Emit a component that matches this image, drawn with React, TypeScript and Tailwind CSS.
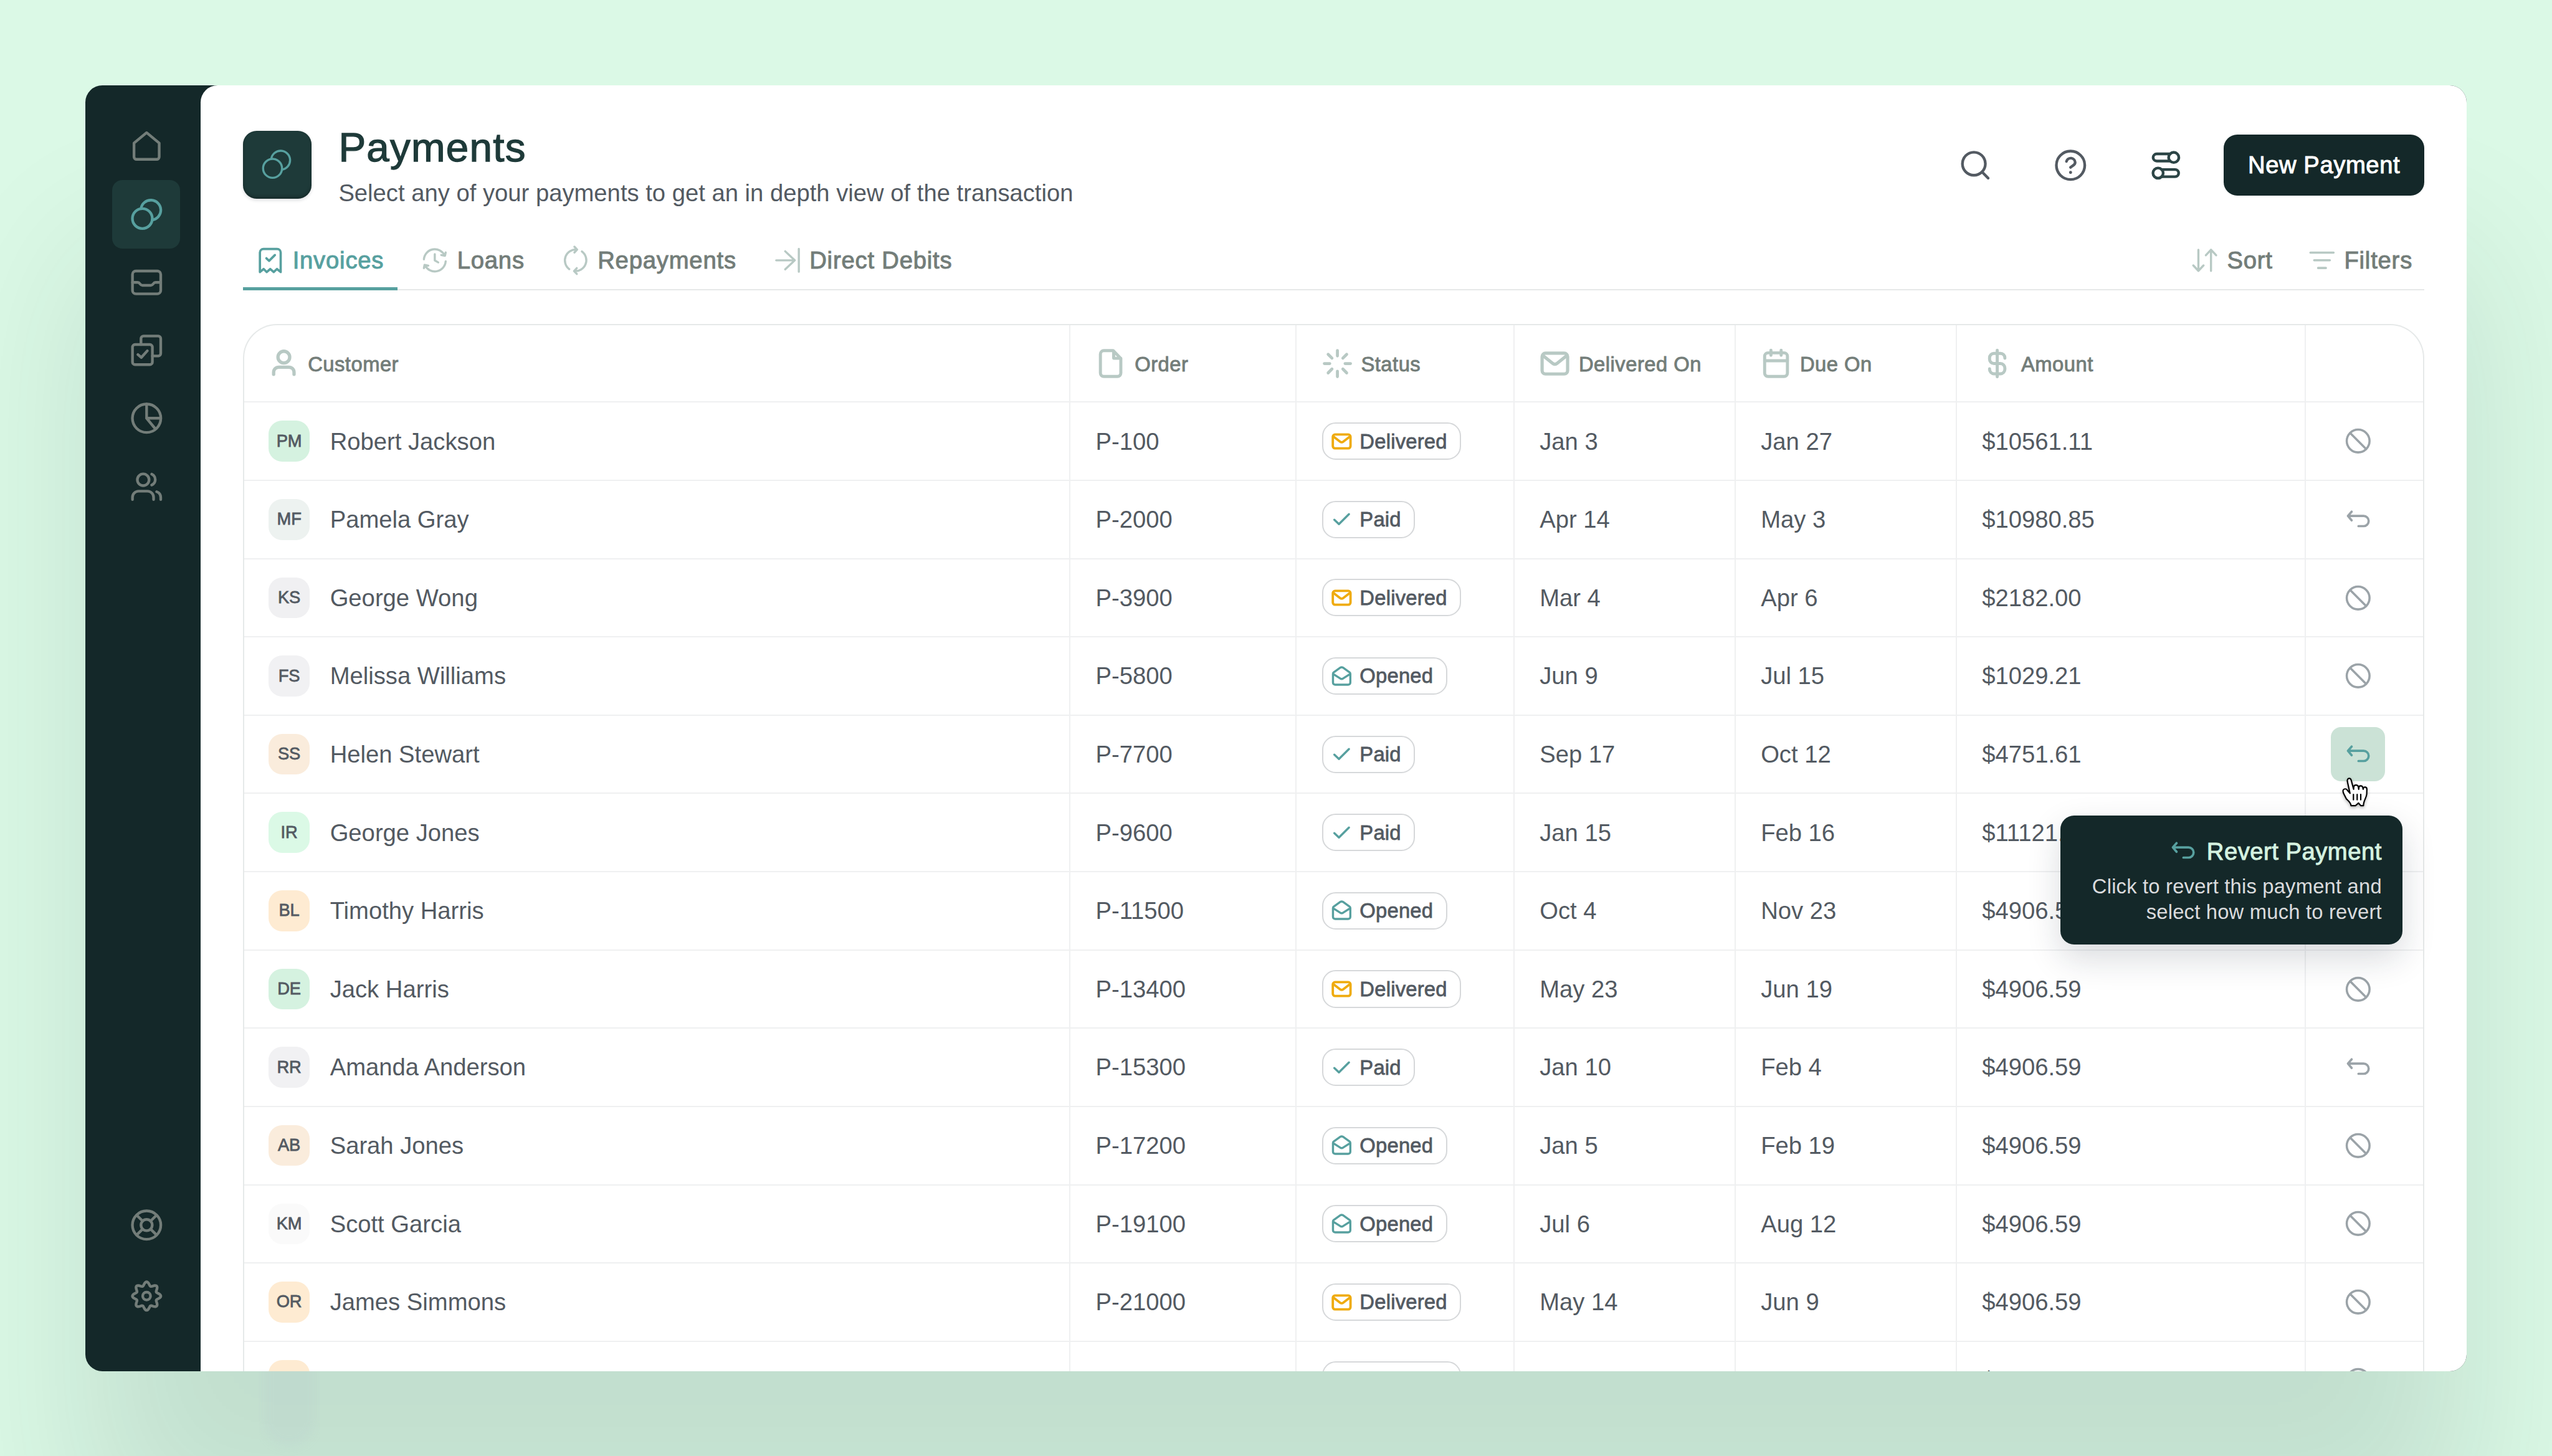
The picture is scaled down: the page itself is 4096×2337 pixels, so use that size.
import { useState } from 'react';
import type { ReactNode } from 'react';

type Status = 'Delivered' | 'Paid' | 'Opened';

interface Payment {
  initials: string;
  color: string;
  name: string;
  order: string;
  status: Status;
  delivered: string;
  due: string;
  amount: string;
  currency?: string;
}

const payments: Payment[] = [
  { initials: 'PM', color: 'bg-[#d5f2e0]', name: 'Robert Jackson', order: 'P-100', status: 'Delivered', delivered: 'Jan 3', due: 'Jan 27', amount: '$10561.11' },
  { initials: 'MF', color: 'bg-[#edf2f0]', name: 'Pamela Gray', order: 'P-2000', status: 'Paid', delivered: 'Apr 14', due: 'May 3', amount: '$10980.85' },
  { initials: 'KS', color: 'bg-[#f0f0f2]', name: 'George Wong', order: 'P-3900', status: 'Delivered', delivered: 'Mar 4', due: 'Apr 6', amount: '$2182.00' },
  { initials: 'FS', color: 'bg-[#f1f1f3]', name: 'Melissa Williams', order: 'P-5800', status: 'Opened', delivered: 'Jun 9', due: 'Jul 15', amount: '$1029.21' },
  { initials: 'SS', color: 'bg-[#faecdc]', name: 'Helen Stewart', order: 'P-7700', status: 'Paid', delivered: 'Sep 17', due: 'Oct 12', amount: '$4751.61' },
  { initials: 'IR', color: 'bg-[#dbf9e6]', name: 'George Jones', order: 'P-9600', status: 'Paid', delivered: 'Jan 15', due: 'Feb 16', amount: '$11121.00' },
  { initials: 'BL', color: 'bg-[#feebd2]', name: 'Timothy Harris', order: 'P-11500', status: 'Opened', delivered: 'Oct 4', due: 'Nov 23', amount: '$4906.59' },
  { initials: 'DE', color: 'bg-[#d5f2e0]', name: 'Jack Harris', order: 'P-13400', status: 'Delivered', delivered: 'May 23', due: 'Jun 19', amount: '$4906.59' },
  { initials: 'RR', color: 'bg-[#f1f1f3]', name: 'Amanda Anderson', order: 'P-15300', status: 'Paid', delivered: 'Jan 10', due: 'Feb 4', amount: '$4906.59' },
  { initials: 'AB', color: 'bg-[#faecdc]', name: 'Sarah Jones', order: 'P-17200', status: 'Opened', delivered: 'Jan 5', due: 'Feb 19', amount: '$4906.59' },
  { initials: 'KM', color: 'bg-[#fafafa]', name: 'Scott Garcia', order: 'P-19100', status: 'Opened', delivered: 'Jul 6', due: 'Aug 12', amount: '$4906.59' },
  { initials: 'OR', color: 'bg-[#feebd2]', name: 'James Simmons', order: 'P-21000', status: 'Delivered', delivered: 'May 14', due: 'Jun 9', amount: '$4906.59' },
  { initials: 'TB', color: 'bg-[#feebd2]', name: 'David Reid', order: 'P-22900', status: 'Delivered', delivered: 'Apr 18', due: 'Jul 18', amount: '$4906.59', currency: 'USD' },
];

interface IconProps {
  className?: string;
  stroke?: number;
  box?: string;
  children?: ReactNode;
}

const Icon = ({ className = 'size-5', stroke = 1.6, box = '0 0 20 20', children }: IconProps) => (
  <svg
    viewBox={box}
    className={`shrink-0 overflow-visible ${className}`}
    fill="none"
    stroke="currentColor"
    strokeWidth={stroke}
    strokeLinecap="round"
    strokeLinejoin="round"
  >
    {children}
  </svg>
);

const HomeIcon = () => (
  <Icon>
    <path d="M2.6 7.9 10 1.8l7.4 6.1V16a1.5 1.5 0 0 1-1.5 1.5H4.1A1.5 1.5 0 0 1 2.6 16z" />
  </Icon>
);

const CoinsIcon = ({ className, stroke }: IconProps) => (
  <Icon className={className} stroke={stroke}>
    <circle cx="7.5" cy="12.4" r="5.85" />
    <path d="M6.7 6.6a5.85 5.85 0 1 1 6.6 6.6" />
  </Icon>
);

const InboxIcon = () => (
  <Icon>
    <rect x="1.7" y="3.3" width="16.6" height="13.4" rx="2" />
    <path d="M1.7 10h3c1.6 0 1.3 1.7 2.8 1.7h5c1.5 0 1.2-1.7 2.8-1.7h3" />
  </Icon>
);

const TasksIcon = () => (
  <Icon>
    <rect x="1.7" y="6.6" width="11.7" height="11.8" rx="1.5" />
    <path d="M6.7 6.6V3.1a1.5 1.5 0 0 1 1.5-1.5h8.6a1.5 1.5 0 0 1 1.5 1.5v8.7a1.5 1.5 0 0 1-1.5 1.5h-3.4M4.9 12.5l2 1.7 3.5-3.9" />
  </Icon>
);

const ChartIcon = () => (
  <Icon>
    <circle cx="10" cy="10" r="8.35" />
    <path d="M10 1.7V10h8.3M10 10l5.2 6.3" />
  </Icon>
);

const UsersIcon = () => (
  <Icon>
    <circle cx="8" cy="5.9" r="3.45" />
    <path d="M1.7 17.5v-1.3a3.6 3.6 0 0 1 3.6-3.6h5.2a3.6 3.6 0 0 1 3.6 3.6v1.3M13 2.6A3.5 3.5 0 0 1 13 9M15.9 12.9a3.6 3.6 0 0 1 2.4 3.3v1.3" />
  </Icon>
);

const HelpBuoyIcon = () => (
  <Icon>
    <circle cx="10" cy="10" r="8.35" />
    <circle cx="10" cy="10" r="3.3" />
    <path d="m4.2 4.2 3.4 3.4M12.4 12.4l3.4 3.4M15.8 4.2l-3.4 3.4M7.6 12.4l-3.4 3.4" />
  </Icon>
);

// eight rounded teeth round the hub
const gearPoints = Array.from({ length: 128 }, (_, i) => {
  const angle = (i / 128) * Math.PI * 2;
  const radius = 7.25 + 1.1 * Math.cos(angle * 8);
  return `${(10 + radius * Math.sin(angle)).toFixed(2)},${(10 - radius * Math.cos(angle)).toFixed(2)}`;
}).join(' ');

const GearIcon = () => (
  <Icon>
    <polygon points={gearPoints} />
    <circle cx="10" cy="10" r="2.3" />
  </Icon>
);

const ReceiptIcon = () => (
  <Icon className="size-4" box="0 0 16 16" stroke={1.35}>
    <path d="M1.9 14.9V3.4A2.1 2.1 0 0 1 4 1.3h8a2.1 2.1 0 0 1 2.1 2.1v11.5l-2.2-1.8-1.9 1.8-2-1.8-2.1 1.8-1.8-1.8zM5.7 6.8l1.6 1.5 3.4-3.4" />
  </Icon>
);

const LoanIcon = () => (
  <Icon className="size-4" box="0 0 16 16" stroke={1.25}>
    <path d="M1.6 7.4a6.4 6.4 0 0 1 12.2-2.2M14.4 8.6a6.4 6.4 0 0 1-12.2 2.2M14.4 3.4 14 5.3l-2.2-.4M1.6 12.6l.4-1.9 2.2.4M8 4.4v3.7l2 1.1" />
  </Icon>
);

const RepaymentIcon = () => (
  <Icon className="size-4" box="0 0 16 16" stroke={1.25}>
    <path d="M4.3 13.2A6.4 6.4 0 0 1 8.9 1.7M11.7 2.8A6.4 6.4 0 0 1 7.1 14.3M7.3 0l1.6 1.7-1.6 1.7M8.7 16l-1.6-1.7 1.6-1.7" />
  </Icon>
);

const DebitIcon = () => (
  <Icon className="size-4" box="0 0 16 16" stroke={1.25}>
    <path d="M1.4 8h10.9M6.7 2.7 12.3 8l-5.6 5.3M14.7 1.3v13.4" />
  </Icon>
);

const SortIcon = () => (
  <Icon className="size-4" box="0 0 16 16" stroke={1.25}>
    <path d="M4.2 1.8v12.4M1.2 11l3 3.2 3-3.2M11.6 14.2V1.8M8.6 5l3-3.2 3 3.2" />
  </Icon>
);

const FilterIcon = () => (
  <Icon className="size-4" box="0 0 16 16" stroke={1.3}>
    <path d="M1.2 3.5h13.6M3.4 8h9.2M5.7 12.5h4.6" />
  </Icon>
);

const UserIcon = () => (
  <Icon className="size-4.5" box="0 0 18 18" stroke={1.95}>
    <circle cx="9" cy="5.2" r="3.45" />
    <path d="M3 15.3v-1.2a3 3 0 0 1 3-3h6a3 3 0 0 1 3 3v1.2" />
  </Icon>
);

const FileIcon = () => (
  <Icon className="size-4.5" box="0 0 18 18" stroke={1.8}>
    <path d="M10.5 1.4H5a2 2 0 0 0-2 2v11.2a2 2 0 0 0 2 2h8a2 2 0 0 0 2-2V6zM10.8 1.6v4.3H15" />
  </Icon>
);

const SpinnerIcon = () => (
  <Icon className="size-4.5" box="0 0 18 18" stroke={1.75}>
    <path d="M9 1.3v3.2M9 13.5v3.2M1.3 9h3.2M13.5 9h3.2M3.55 3.55 5.8 5.8M12.2 12.2l2.25 2.25M3.55 14.45 5.8 12.2M12.2 5.8l2.25-2.25" />
  </Icon>
);

const MailIcon = () => (
  <Icon className="size-4.5" box="0 0 18 18" stroke={1.9}>
    <rect x="1.5" y="2.9" width="15" height="12.2" rx="2" />
    <path d="m2 4.3 5.7 4.6a2 2 0 0 0 2.6 0L16 4.3" />
  </Icon>
);

const CalendarIcon = () => (
  <Icon className="size-4.5" box="0 0 18 18" stroke={1.8}>
    <rect x="2.3" y="2.7" width="13.4" height="13.9" rx="2" />
    <path d="M2.3 7.3h13.4M6 1.2v2.9M12 1.2v2.9" />
  </Icon>
);

const DollarIcon = () => (
  <Icon className="size-4.5" box="0 0 18 18" stroke={1.8}>
    <path d="M9 1.2v15.6M13.5 5.9v-.3A2.6 2.6 0 0 0 10.9 3H7.1a2.6 2.6 0 0 0-2.6 2.6v.8A2.6 2.6 0 0 0 7.1 9h3.8a2.6 2.6 0 0 1 2.6 2.6v.8a2.6 2.6 0 0 1-2.6 2.6H7.1a2.6 2.6 0 0 1-2.6-2.6v-.3" />
  </Icon>
);

const BlockedIcon = () => (
  <Icon className="size-4" box="0 0 16 16" stroke={1.3}>
    <circle cx="8" cy="8" r="6.7" />
    <path d="m3.3 3.3 9.4 9.4" />
  </Icon>
);

const RevertIcon = () => (
  <Icon className="size-4" box="0 0 16 16" stroke={1.35}>
    <path d="M4.2 3.4 2 5.9l2.2 2.6M2 5.9h9.2a3 3 0 0 1 0 6h-3" />
  </Icon>
);

const statusIcons: Record<Status, ReactNode> = {
  Delivered: (
    <Icon className="size-3 text-[#efab0f]" box="0 0 12 12" stroke={1.4}>
      <rect x=".8" y="2" width="10.4" height="8.1" rx="1.3" />
      <path d="m1.2 3.2 3.9 3a1.5 1.5 0 0 0 1.8 0l3.9-3" />
    </Icon>
  ),
  Opened: (
    <Icon className="size-3 text-[#57a09f]" box="0 0 12 12" stroke={1.25}>
      <path d="M.9 4.6v5.1c0 .8.6 1.3 1.3 1.3h7.6c.7 0 1.3-.5 1.3-1.3V4.6c0-.4-.2-.8-.6-1L6.7.9a1.4 1.4 0 0 0-1.4 0L1.5 3.6c-.4.2-.6.6-.6 1zM1.2 4.8l3.9 2.5a1.5 1.5 0 0 0 1.8 0l3.9-2.5" />
    </Icon>
  ),
  Paid: (
    <Icon className="size-3 text-[#57a09f]" box="0 0 12 12" stroke={1.25}>
      <path d="m1.7 6.3 2.7 2.6L10.300 3" />
    </Icon>
  ),
};

const grid = 'grid grid-cols-[30.34375rem_8.3125rem_8rem_8.125rem_8.125rem_12.8125rem_1fr]';
const cell = 'flex items-center border-r-[0.0625rem] border-[#eff0f1] pl-[0.921875rem] first:pl-[0.89rem]';

const columns = [
  { label: 'Customer', icon: <UserIcon /> },
  { label: 'Order', icon: <FileIcon /> },
  { label: 'Status', icon: <SpinnerIcon /> },
  { label: 'Delivered On', icon: <MailIcon /> },
  { label: 'Due On', icon: <CalendarIcon /> },
  { label: 'Amount', icon: <DollarIcon /> },
];

const tabs = [
  { label: 'Invoices', icon: <ReceiptIcon /> },
  { label: 'Loans', icon: <LoanIcon /> },
  { label: 'Repayments', icon: <RepaymentIcon /> },
  { label: 'Direct Debits', icon: <DebitIcon /> },
];

const Sidebar = () => (
  <aside className="flex w-17 shrink-0 flex-col items-center pt-4 pl-1 text-[#737d79]">
    <button className="flex size-10 items-center justify-center"><HomeIcon /></button>
    <button className="flex size-10 items-center justify-center rounded-[0.375rem] bg-[#1e3a39] text-[#57a09f]">
      <CoinsIcon />
    </button>
    <button className="flex size-10 items-center justify-center"><InboxIcon /></button>
    <button className="flex size-10 items-center justify-center"><TasksIcon /></button>
    <button className="flex size-10 items-center justify-center"><ChartIcon /></button>
    <button className="flex size-10 items-center justify-center"><UsersIcon /></button>
    <div className="mt-auto flex flex-col gap-0.5 pb-6">
      <button className="flex size-10 items-center justify-center"><HelpBuoyIcon /></button>
      <button className="flex size-10 items-center justify-center"><GearIcon /></button>
    </div>
  </aside>
);

const Header = () => (
  <header className="flex h-[3.125rem] items-start">
    <div className="mt-[0.1875rem] flex size-10 items-center justify-center rounded-lg bg-[#1e3a39] pr-[0.0625rem] pb-[0.0625rem] text-[#57a09f] shadow-[0_0.0625rem_0.125rem_rgba(16,24,40,0.12),inset_0_-0.0625rem_0.125rem_rgba(0,0,0,0.3)]">
      <CoinsIcon className="size-[1.1875rem]" stroke={1.3} />
    </div>
    <div className="ml-4">
      <h1 className="-mt-[0.03125rem] text-[1.5rem] leading-[1.625rem] tracking-[0.019em] text-[#1e3a39] [-webkit-text-stroke:0.03rem_#1e3a39]">Payments</h1>
      <p className="mt-[0.25rem] text-[0.875rem] leading-5 text-[#535a62]">
        Select any of your payments to get an in depth view of the transaction
      </p>
    </div>
    <div className="mt-[0.3125rem] ml-auto flex h-9 items-center gap-9 text-[#535a62]">
      <Icon>
        <circle cx="9.2" cy="9.1" r="6.75" />
        <path d="m14.1 14 3.5 3.6" />
      </Icon>
      <Icon>
        <circle cx="10" cy="10" r="8.35" />
        <path d="M7.6 7.7a2.6 2.6 0 0 1 5.1.6c0 1.6-1.7 1.9-2.7 2.9" />
        <circle cx="10" cy="14.2" r=".9" fill="currentColor" stroke="none" />
      </Icon>
      <Icon className="size-5 text-[#2c4546]">
        <circle cx="14.6" cy="5.4" r="3" />
        <circle cx="5.4" cy="14.6" r="3" />
        <path d="M12.5 3.3H4.6a2.1 2.1 0 0 0 0 4.2h7.9M7.5 12.5h7.9a2.1 2.1 0 0 1 0 4.2H7.5" />
      </Icon>
    </div>
    <button className="mt-[0.3125rem] ml-6 flex h-9 w-[7.375rem] items-center justify-center rounded-lg bg-[#142829] text-[0.875rem] tracking-[0.015em] text-white [-webkit-text-stroke:0.022rem_#fff]">
      New Payment
    </button>
  </header>
);

const StatusBadge = ({ status }: { status: Status }) => (
  <span className="flex h-[1.375rem] items-center gap-[0.28125rem] rounded-lg border-[0.0625rem] border-[#d6d8da] pr-[0.46875rem] pl-[0.3125rem] text-[0.75rem] tracking-[0.007em] text-[#535a62] [-webkit-text-stroke:0.018rem_#535a62]">
    {statusIcons[status]}
    {status}
  </span>
);

const RevertTooltip = () => (
  <div className="absolute top-[3.25rem] right-[-0.625rem] z-10 flex h-[4.75rem] w-[12.5625rem] flex-col items-end rounded-lg bg-[#142829] pt-3 pr-3 text-right shadow-[0_0.5rem_1.25rem_rgba(20,30,50,0.16)]">
    <div className="flex items-center gap-1.5 text-[0.875rem] leading-[1.125rem] tracking-[0.013em] whitespace-nowrap text-[#d5f2e0] [-webkit-text-stroke:0.022rem_#d5f2e0]">
      <span className="text-[#57a09f]"><RevertIcon /></span>
      Revert Payment
    </div>
    <p className="mt-[0.28125rem] text-[0.75rem] leading-[0.9375rem] tracking-[0.006em] whitespace-nowrap text-[#dadbdd]">
      Click to revert this payment and
      <br />
      select how much to revert
    </p>
  </div>
);

const HandCursor = () => (
  <svg
    viewBox="0 0 15 17"
    className="absolute top-[1.84375rem] left-[0.40625rem] z-20 h-[1.0625rem] w-[0.9375rem] overflow-visible drop-shadow-[0_0.0625rem_0.0625rem_rgba(0,0,0,0.3)]"
    fill="#fff"
    stroke="#000"
    strokeWidth="0.8"
    strokeLinejoin="round"
    strokeLinecap="round"
  >
    <path d="M4.3.5C3.2.5 3 1.5 3.2 2.6l1.5 6.7L3 7.300c-.7-.9-1.7-.7-2.200-.1-.6.7-.1 1.6.3 2.500l1.300 2.600c.6 1 2.600 1.900 2.900 4.200h2.600L9.700 15l1.300 1.500h1.600c-.1-2.600 1.700-4.500 1.900-6.700l.1-2.900c0-1.500-2-1.700-2.100-.3l-.1.3-.2-1c-.3-1.400-2.300-1.300-2.300.1l-.1.9-.2-1.400c-.3-1.500-2.600-1.400-2.700 0l-.1 1.400-1.400-5.300C5.200.9 4.900.5 4.300.5z" />
    <path d="M6.7 9.900v3.200M8.900 9.900v3.200M11 9.900v3.200" />
  </svg>
);

const App = () => {
  const [activeTab, setActiveTab] = useState('Invoices');
  const hovered = 'P-7700';

  return (
    <div className="h-screen w-screen overflow-hidden bg-[#dbf9e6] p-[3.125rem] font-['Liberation_Sans',Arial,sans-serif]">
      {/* one rem is 16 units of the 1500 unit wide canvas */}
      <style>{'html { font-size: calc(100vw * 16 / 1500); }'}</style>
      <div className="relative flex h-[47.25rem] w-[87.5rem] rounded-[0.625rem] bg-[#142829] shadow-[0_6.25rem_6.25rem_rgba(20,40,41,0.12)]">
        <Sidebar />
        <main className="flex min-w-0 flex-1 flex-col overflow-hidden rounded-tl-[0.625rem] rounded-r-[0.625rem] bg-white px-[1.5625rem] pt-6">
          <Header />

          <nav className="mt-[0.875rem] flex h-[2.0625rem] shrink-0 justify-between border-b-[0.0625rem] border-[#e6e9e9] text-[0.875rem] tracking-[0.021em] text-[#737d79] [-webkit-text-stroke:0.022rem_currentColor]">
            <div className="flex gap-1.5">
              {tabs.map((tab) => (
                <button
                  key={tab.label}
                  onClick={() => setActiveTab(tab.label)}
                  className={`flex h-[2.0625rem] items-center gap-[0.3125rem] border-b-[0.125rem] px-2 ${
                    activeTab === tab.label ? 'border-[#57a09f] text-[#57a09f]' : 'border-transparent'
                  }`}
                >
                  <span className={activeTab === tab.label ? '' : 'text-[#b8c9c4]'}>{tab.icon}</span>
                  {tab.label}
                </button>
              ))}
            </div>
            <div className="flex items-center gap-[1.3125rem] pr-[0.4375rem] pb-[0.0625rem]">
              <button className="flex items-center gap-[0.3125rem]"><span className="text-[#b8c9c4]"><SortIcon /></span>Sort</button>
              <button className="flex items-center gap-[0.3125rem]"><span className="text-[#b8c9c4]"><FilterIcon /></span>Filters</button>
            </div>
          </nav>

          <section className="mt-5 shrink-0 rounded-t-[1.25rem] border-[0.0625rem] border-b-0 border-[#e6e9e9]">
            <div className={`${grid} h-[2.84375rem] border-b-[0.0625rem] border-[#eff0f1]`}>
              {columns.map((col) => (
                <div key={col.label} className={`${cell} gap-[0.3125rem] text-[0.75rem] tracking-[0.015em] text-[#737d79] [-webkit-text-stroke:0.02rem_currentColor]`}>
                  <span className="text-[#b8c9c4]">{col.icon}</span>
                  <span className="pt-[0.0625rem]">{col.label}</span>
                </div>
              ))}
            </div>
            {payments.map((p) => (
              <div key={p.order} className={`${grid} h-[2.875rem] border-b-[0.0625rem] border-[#eff0f1] text-[0.875rem] text-[#535a62]`}>
                <div className={cell}>
                  <span className={`mr-3 flex size-6 items-center justify-center rounded-lg text-[0.625rem] [-webkit-text-stroke:0.018rem_#535a62] ${p.color}`}>
                    {p.initials}
                  </span>
                  {p.name}
                </div>
                <div className={cell}>{p.order}</div>
                <div className={cell}><StatusBadge status={p.status} /></div>
                <div className={cell}>{p.delivered}</div>
                <div className={cell}>{p.due}</div>
                <div className={cell}>
                  {p.amount}
                  {p.currency && <span className="ml-auto pr-5 text-[0.75rem] leading-3.5">{p.currency}</span>}
                </div>
                <div className="flex items-center pl-[0.921875rem] text-[#9ba3a8]">
                  <div className={`relative flex size-8 items-center justify-center rounded-[0.375rem] ${p.order === hovered ? 'bg-[#cbe2d6] text-[#57a09f]' : ''}`}>
                    {p.status === 'Paid' ? <RevertIcon /> : <BlockedIcon />}
                    {p.order === hovered && (
                      <>
                        <HandCursor />
                        <RevertTooltip />
                      </>
                    )}
                  </div>
                </div>
              </div>
            ))}
          </section>
        </main>
        {/* faint shade cast below the cut off avatar */}
        <div className="absolute top-full left-[6.375rem] h-[3.125rem] w-[2.25rem] overflow-hidden">
          <div className="-mt-4 ml-[0.1875rem] h-15 w-[1.875rem] rounded-full bg-[#b4bcd0]/14 blur-[0.1875rem]" />
        </div>
      </div>
    </div>
  );
};

export default App;
